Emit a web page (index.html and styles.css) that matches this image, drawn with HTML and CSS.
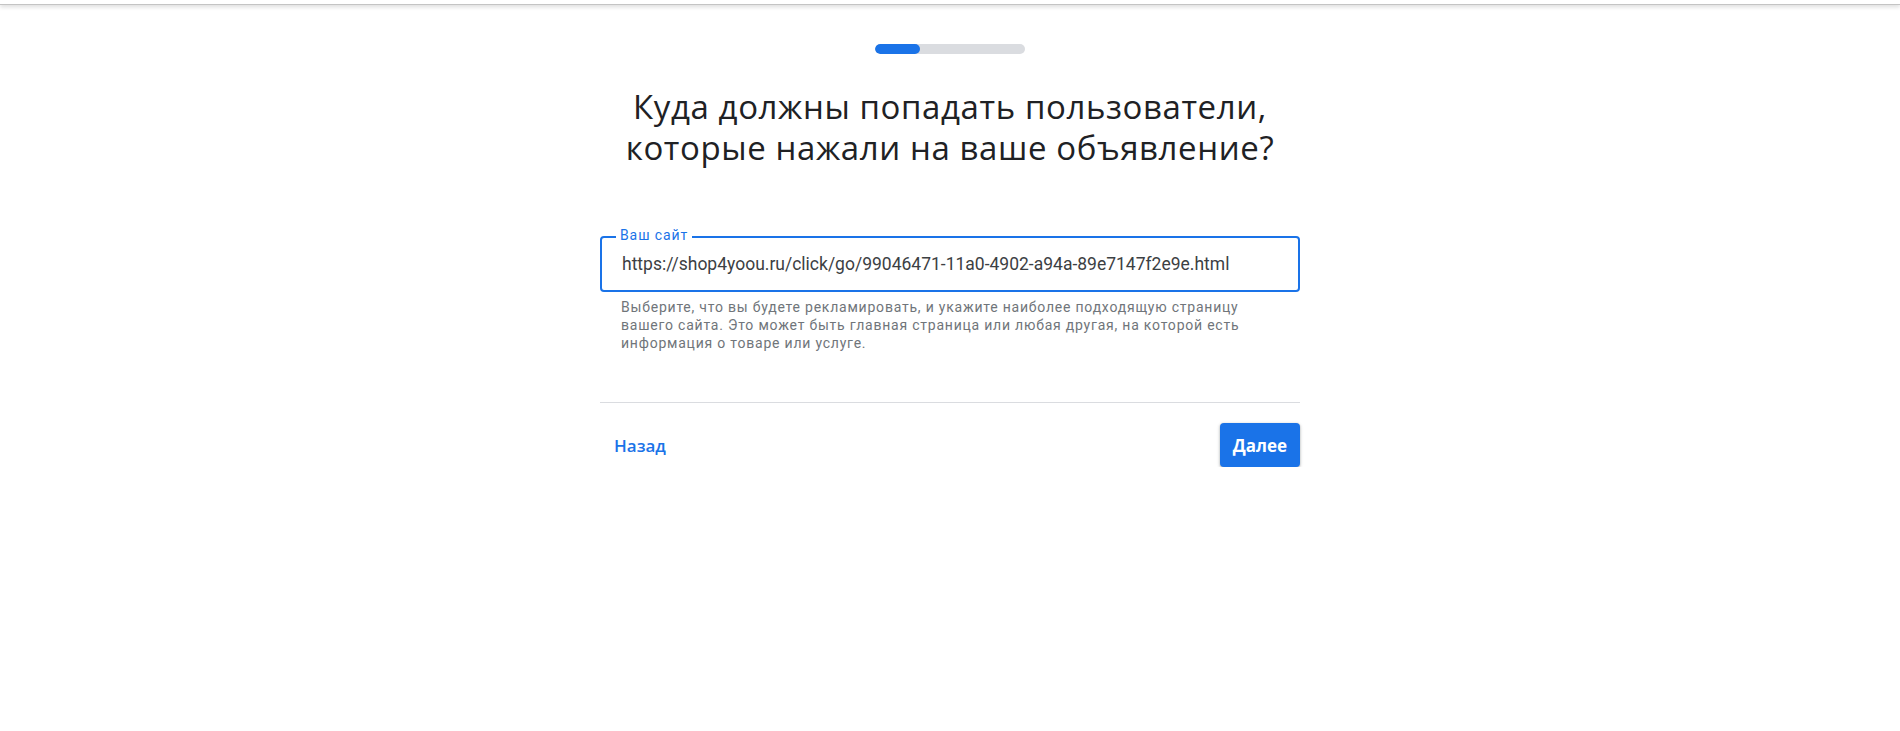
FILE: index.html
```html
<!DOCTYPE html>
<html lang="ru">
<head>
<meta charset="utf-8">
<title>Ваш сайт</title>
<link rel="stylesheet" href="styles.css">
</head>
<body>
<div class="topbar"></div>
<main class="page">
  <div class="progress"><div class="progress-fill"></div></div>
  <h1 class="title">Куда должны попадать пользователи,<br>которые нажали на ваше объявление?</h1>
  <div class="field">
    <div class="field-box">
      <span class="field-label">Ваш сайт</span>
      <span class="field-value">https://shop4yoou.ru/click/go/99046471-11a0-4902-a94a-89e7147f2e9e.html</span>
    </div>
    <p class="field-help">Выберите, что вы будете рекламировать, и укажите наиболее подходящую страницу вашего сайта. Это может быть главная страница или любая другая, на которой есть информация о товаре или услуге.</p>
  </div>
  <div class="divider"></div>
  <div class="actions">
    <button class="btn-text">Назад</button>
    <button class="btn-primary">Далее</button>
  </div>
</main>
</body>
</html>
```
FILE: styles.css
```css
html, body {
  margin: 0;
  padding: 0;
  background: #ffffff;
}
body {
  font-family: Roboto, "Liberation Sans", sans-serif;
  color: #202124;
}
.topbar {
  height: 4px;
  background: #ffffff;
  border-bottom: 1px solid #c4c4c4;
  box-shadow: 0 2px 4px rgba(0, 0, 0, 0.14);
}
.page {
  width: 700px;
  margin: 0 auto;
  display: flex;
  flex-direction: column;
  align-items: stretch;
}
.progress {
  align-self: center;
  width: 150px;
  height: 10px;
  margin-top: 39px;
  border-radius: 5px;
  background: #dadce0;
  overflow: hidden;
}
.progress-fill {
  width: 45px;
  height: 100%;
  border-radius: 5px;
  background: #1a73e8;
}
.title {
  margin: 32px 0 0;
  font-family: "Open Sans", sans-serif;
  font-weight: 400;
  font-size: 33px;
  line-height: 41px;
  letter-spacing: 0.6px;
  text-align: center;
  color: #202124;
}
.field {
  margin-top: 68px;
}
.field-box {
  position: relative;
  height: 56px;
  box-sizing: border-box;
  border: 2px solid #1a73e8;
  border-radius: 4px;
  padding: 0 20px;
  display: flex;
  align-items: center;
}
.field-label {
  position: absolute;
  top: -11px;
  left: 14px;
  padding: 0 4px;
  background: #ffffff;
  font-size: 14px;
  line-height: 16px;
  letter-spacing: 0.9px;
  color: #1a73e8;
}
.field-value {
  font-size: 17.5px;
  color: #3c4043;
  white-space: nowrap;
}
.field-help {
  margin: 6px 0 0;
  padding: 0 38px 0 21px;
  font-size: 14px;
  line-height: 18px;
  letter-spacing: 0.78px;
  color: #70757a;
}
.divider {
  margin-top: 50px;
  height: 1px;
  background: #dadce0;
}
.actions {
  margin-top: 20px;
  display: flex;
  justify-content: space-between;
  align-items: center;
}
.btn-text {
  border: 0;
  background: transparent;
  padding: 0 14px;
  height: 44px;
  font-family: "Open Sans", sans-serif;
  font-weight: 600;
  font-size: 17px;
  color: #1a73e8;
  cursor: pointer;
}
.btn-primary {
  width: 80px;
  height: 44px;
  padding: 0;
  border: 0;
  border-radius: 4px;
  background: #1a73e8;
  color: #ffffff;
  font-family: "Open Sans", sans-serif;
  font-weight: 700;
  font-size: 17px;
  box-shadow: 0 1px 2px rgba(60, 64, 67, 0.3), 0 1px 3px 1px rgba(60, 64, 67, 0.15);
  cursor: pointer;
}
```
